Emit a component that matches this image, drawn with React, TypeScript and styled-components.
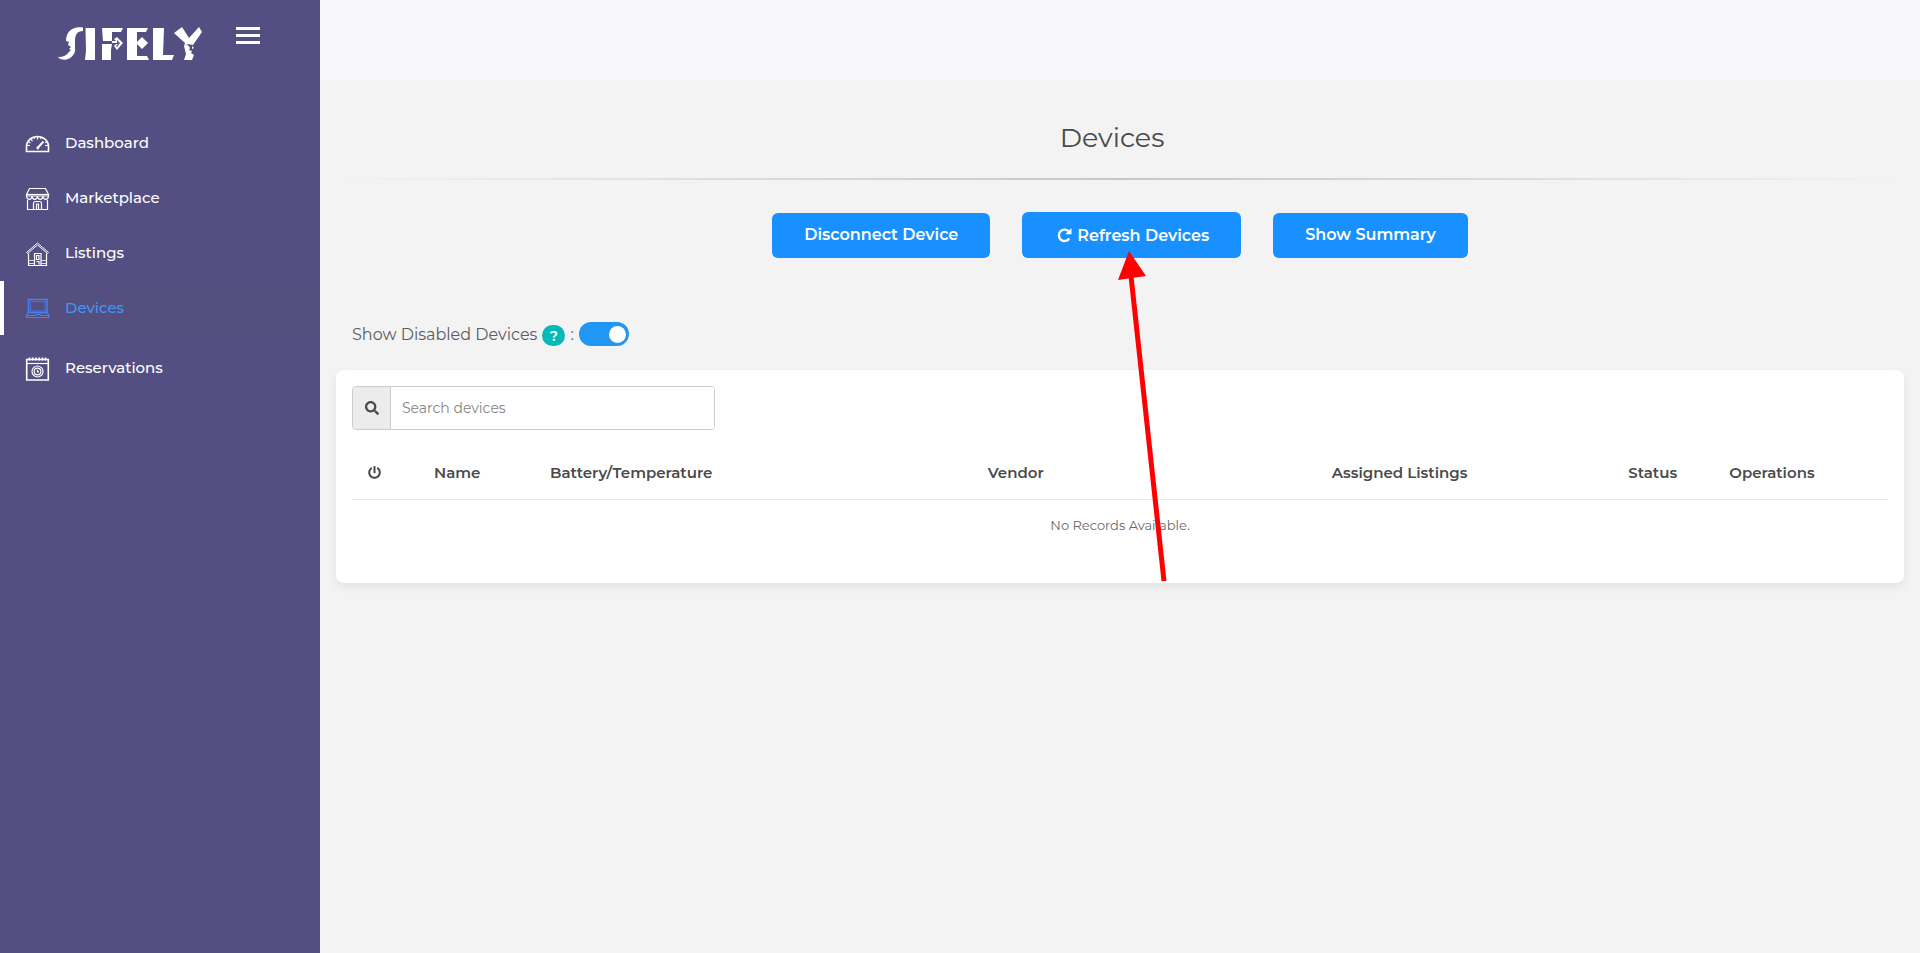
import React, { useState } from "react";
import styled, { createGlobalStyle } from "styled-components";
import { FaSearch, FaPowerOff } from "react-icons/fa";

const GlobalStyle = createGlobalStyle`
  * { box-sizing: border-box; }
  body {
    margin: 0;
    background: #f3f3f3;
    color: #4a4a4a;
    font-family: Montserrat, Inter, "Open Sans", sans-serif;
    font-size: 14px;
  }
  button, input { font-family: inherit; }
`;

const Page = styled.div`
  position: relative;
  display: flex;
  min-height: 100vh;
`;

const Sidebar = styled.aside`
  flex: 0 0 320px;
  background: #544f82;
`;

const Brand = styled.div`
  display: flex;
  align-items: flex-start;
  gap: 33px;
  height: 115px;
  padding: 24px 0 0 57px;
`;

const LogoLink = styled.a`
  display: block;
  line-height: 0;
`;

const MenuButton = styled.button`
  display: flex;
  flex-direction: column;
  gap: 4px;
  margin-top: 3px;
  padding: 0;
  border: 0;
  background: none;
  cursor: pointer;
`;

const MenuBar = styled.span`
  width: 24px;
  height: 3px;
  background: #fff;
`;

const NavLink = styled.a<{ $active?: boolean; $spaced?: boolean }>`
  display: flex;
  align-items: center;
  gap: 15px;
  height: 54px;
  margin-top: ${(p) => (p.$spaced ? 6 : 1)}px;
  padding-bottom: 2px;
  padding-left: ${(p) => (p.$active ? 21 : 25)}px;
  border-left: ${(p) => (p.$active ? "4px solid #fff" : "0")};
  background: ${(p) => (p.$active ? "#554f80" : "transparent")};
  color: ${(p) => (p.$active ? "#3f96f2" : "#fff")};
  font-size: 15px;
  font-weight: 500;
  text-decoration: none;

  svg {
    color: ${(p) => (p.$active ? "#4780f0" : "#fff")};
    margin-top: 2px;
  }
`;

const Main = styled.main`
  flex: 1;
  min-width: 0;
`;

const TopBar = styled.header`
  height: 80px;
  background: #f8f8fb;
`;

const Content = styled.div`
  padding: 0 16px 32px;
`;

const Title = styled.h1`
  margin: 0;
  padding: 41px 16px 23px 0;
  font-size: 27px;
  line-height: 34px;
  font-weight: 400;
  text-align: center;
`;

const Rule = styled.hr`
  height: 2px;
  margin: 0;
  border: 0;
  background: linear-gradient(to right, transparent, #c6c6c6, transparent);
`;

const Actions = styled.div`
  display: flex;
  justify-content: center;
  align-items: flex-end;
  gap: 32px;
  padding-top: 32px;
`;

const ActionButton = styled.button<{ $tall?: boolean }>`
  display: flex;
  align-items: center;
  justify-content: center;
  gap: 5px;
  height: ${(p) => (p.$tall ? 46 : 45)}px;
  padding: ${(p) => (p.$tall ? "0 32px 0 35px" : "0 32px 2px")};
  border: 0;
  border-radius: 6px;
  background: #1890ff;
  color: #fff;
  font-size: 16px;
  font-weight: 600;
  cursor: pointer;
`;

const FilterRow = styled.div`
  display: flex;
  align-items: center;
  gap: 5px;
  height: 24px;
  margin: 64px 16px 24px;
  color: #5c5c5c;
  font-size: 16px;
  font-weight: 400;
`;

const HelpButton = styled.button`
  width: 23px;
  height: 21px;
  margin-top: 3px;
  padding: 0;
  border: 0;
  border-radius: 11px;
  background: #04b9b9;
  color: #fff;
  font-size: 14px;
  font-weight: 600;
  line-height: 20px;
`;

const Switch = styled.input`
  appearance: none;
  display: flex;
  align-items: center;
  justify-content: flex-start;
  width: 50px;
  height: 24px;
  margin: 0;
  padding: 0 3px;
  border-radius: 12px;
  background: #ccc;
  cursor: pointer;

  &::before {
    content: "";
    width: 17px;
    height: 17px;
    border-radius: 50%;
    background: #fff;
  }

  &:checked {
    justify-content: flex-end;
    background: #2196f3;
  }
`;

const Card = styled.section`
  min-height: 213px;
  padding: 16px;
  border-radius: 8px;
  background: #fff;
  box-shadow: 0 4px 10px rgba(0, 0, 0, 0.07);
`;

const SearchGroup = styled.label`
  display: flex;
  width: 363px;
  max-width: 100%;
  height: 44px;
  border: 1px solid #ccc;
  border-radius: 4px;
  overflow: hidden;
`;

const SearchIcon = styled.span`
  display: flex;
  align-items: center;
  justify-content: center;
  width: 38px;
  border-right: 1px solid #ccc;
  background: #ececec;
`;

const SearchInput = styled.input`
  flex: 1;
  min-width: 0;
  padding: 0 11px;
  border: 0;
  outline: 0;
  color: #4a4a4a;
  font-size: 14px;

  &::placeholder { color: #858585; }
`;

const Table = styled.table`
  width: 100%;
  margin-top: 15px;
  border-collapse: collapse;
  table-layout: fixed;
`;

const HeadCell = styled.th`
  height: 54px;
  padding: 1px 12px 0;
  border-bottom: 1px solid #e9e9e9;
  font-size: 15px;
  font-weight: 600;
  text-align: left;
  white-space: nowrap;
`;

const HeadIcon = styled(HeadCell)`
  padding-left: 16px;
  line-height: 0;
`;

const EmptyCell = styled.td`
  height: 52px;
  padding: 0;
  color: #686868;
  font-size: 13px;
  font-weight: 400;
  text-align: center;
`;

const Pointer = styled.svg`
  position: absolute;
  top: 250px;
  left: calc(50% + 156px);
  pointer-events: none;
`;

const iconProps = {
  width: 25,
  height: 25,
  viewBox: "0 0 25 25",
  fill: "none",
  stroke: "currentColor",
  strokeWidth: 1.2,
  "aria-hidden": true,
};

const Logo = () => (
  <svg width="146" height="37" viewBox="0 0 146 37" fill="#fff" role="img" aria-label="Sifely">
    <path d="M26 3.500V7C20 7 18 11 18 17V24C19 28 16 32 13 34C9 37 3 36 1 33C6 33 9 32 12 28L14 26L12 25L14 23L11 21L12 18L9 17C9 8 15 2 26 3.500Z" />
    <path d="M28.500 4H38V36H28L29 27Z" />
    <path d="M45 4H66L64 8H55V17H46Z" />
    <path d="M45 20H55L54 26V36H45Z" />
    <path d="M55 17H59L57 15L60 13L66 19L60 26L57 22L59 20H61L59 22L60 23L63 19L60 16V19H55Z" />
    <path d="M70 4H91L89 8H80V32H90L92 36H70Z" />
    <path d="M85 13L91 19L85 25L79 19Z" />
    <path d="M96 4H107L106 31H117L115 36H96Z" />
    <path d="M117 9L125 3L132 14L142 3L145 8L136 21L131 20L127 23L128 19Z" />
    <path d="M127 22L131 21L133 24L132 26L135 27L134 29L137 31L135 36H127L129 30Z" />
    <path d="M135 22L137 24L135 25Z" />
  </svg>
);

const DashboardIcon = () => (
  <svg {...iconProps}>
    <path d="M1.500 20.500V15.500a11 10 0 0 1 22 0V20.500Z" strokeWidth="1.600" />
    <path d="M12.500 6v2.500M6 8.500l1.500 1.500M2 14.500h3M20 14.500h3M3.500 11l2 1M9 6.500l.5 1.500M16 6.500l-.5 1.500M21.500 11l-1.500.8" />
    <path d="M13 16.500l5.500-6" strokeWidth="1.900" />
    <circle cx="12.800" cy="17" r=".8" />
  </svg>
);

const MarketIcon = () => (
  <svg {...iconProps}>
    <path d="M4.500 2.500h16l3 6v1.500H1.500V8.500Z" />
    <path d="M2 8.500h21" />
    <path d="M1.500 10c.5 4.500 5 4.500 5.500 0c.5 4.500 5 4.500 5.500 0c.5 4.500 5 4.500 5.500 0c.5 4.500 5 4.500 5.500 0" />
    <path d="M2.500 14v9.500h20V14M8.500 23.500V17.500q0-2 2-2h4q2 0 2 2V23.500M11.500 23.500v-5.500h2v5.500" />
  </svg>
);

const ListingsIcon = () => (
  <svg {...iconProps}>
    <path d="M1.500 11.500L12.500 2L23.500 11.500L22.500 12.500L12.500 4L2.500 12.500Z" strokeWidth="1" />
    <path d="M3.500 12.500v12h18v-12M9.500 24V12.500h6.500V24M11.500 14.500h2.500v4h-2.500ZM11.500 20.500h2.500v3" />
    <path d="M3.500 19.500h6M16 19.500h5.500M3.500 22.500h6M16 22.500h5.500" strokeWidth=".8" />
  </svg>
);

const DevicesIcon = () => (
  <svg {...iconProps}>
    <path d="M3.500 3.500h18.500v13h-18.500Z" strokeWidth="1.500" />
    <path d="M5.500 5.500h14.500v9.500h-14.500Z" strokeWidth=".7" />
    <path d="M3.500 16.500L1.500 19.500v2h22.500v-2l-2-3M1.500 19.500h8l1-1h4.500l1 1h8" />
  </svg>
);

const ReservationsIcon = () => (
  <svg {...iconProps}>
    <path d="M1.700 3.500h21.600v20.500H1.700Z" strokeWidth="1.600" />
    <path d="M2 7.500h21" />
    <path d="M4.500 4.500V1.500M7.700 4.500V1.500M10.900 4.500V1.500M14.100 4.500V1.500M17.300 4.500V1.500M20.500 4.500V1.500" strokeWidth="1.700" />
    <circle cx="12.500" cy="15.500" r="5.500" />
    <circle cx="12.500" cy="15.500" r="3.300" />
    <path d="M12.500 13.800v2h1.500" />
  </svg>
);

const RefreshIcon = () => (
  <svg width="15" height="16" viewBox="0 0 15 16" aria-hidden="true">
    <path d="M12.300 11.500A5.700 5.700 0 1 1 11.300 4" fill="none" stroke="#fff" strokeWidth="2.400" />
    <path d="M14.500 1V7.200H8.300Z" fill="#fff" />
  </svg>
);

const navItems = [
  { label: "Dashboard", Icon: DashboardIcon },
  { label: "Marketplace", Icon: MarketIcon },
  { label: "Listings", Icon: ListingsIcon },
  { label: "Devices", Icon: DevicesIcon, active: true },
  { label: "Reservations", Icon: ReservationsIcon, spaced: true },
];

const columns = [
  { label: "Name", width: "116px" },
  { label: "Battery/Temperature", width: "28.5%" },
  { label: "Vendor", width: "22.4%" },
  { label: "Assigned Listings", width: "19.3%" },
  { label: "Status", width: "101px" },
  { label: "Operations", width: "auto" },
];

export default function App() {
  const [showDisabled, setShowDisabled] = useState(true);
  const [query, setQuery] = useState("");

  return (
    <>
      <GlobalStyle />
      <Page>
        <Sidebar>
          <Brand>
            <LogoLink href="#home">
              <Logo />
            </LogoLink>
            <MenuButton aria-label="Toggle menu">
              <MenuBar />
              <MenuBar />
              <MenuBar />
            </MenuButton>
          </Brand>
          <nav>
            {navItems.map(({ label, Icon, active, spaced }) => (
              <NavLink key={label} href={"#" + label.toLowerCase()} $active={active} $spaced={spaced}>
                <Icon />
                {label}
              </NavLink>
            ))}
          </nav>
        </Sidebar>
        <Main>
          <TopBar />
          <Content>
            <Title>Devices</Title>
            <Rule />
            <Actions>
              <ActionButton>Disconnect Device</ActionButton>
              <ActionButton $tall>
                <RefreshIcon />
                Refresh Devices
              </ActionButton>
              <ActionButton>Show Summary</ActionButton>
            </Actions>
            <FilterRow>
              <label htmlFor="show-disabled">Show Disabled Devices</label>
              <HelpButton aria-label="Help">?</HelpButton>
              <span>:</span>
              <Switch
                id="show-disabled"
                type="checkbox"
                role="switch"
                checked={showDisabled}
                onChange={(e) => setShowDisabled(e.target.checked)}
              />
            </FilterRow>
            <Card>
              <SearchGroup>
                <SearchIcon>
                  <FaSearch size={14} />
                </SearchIcon>
                <SearchInput
                  type="text"
                  aria-label="Search devices"
                  placeholder="Search devices"
                  value={query}
                  onChange={(e) => setQuery(e.target.value)}
                />
              </SearchGroup>
              <Table>
                <colgroup>
                  <col style={{ width: "70px" }} />
                  {columns.map((c) => (
                    <col key={c.label} style={{ width: c.width }} />
                  ))}
                </colgroup>
                <thead>
                  <tr>
                    <HeadIcon aria-label="Power">
                      <FaPowerOff size={13} />
                    </HeadIcon>
                    {columns.map((c) => (
                      <HeadCell key={c.label}>{c.label}</HeadCell>
                    ))}
                  </tr>
                </thead>
                <tbody>
                  <tr>
                    <EmptyCell colSpan={7}>No Records Available.</EmptyCell>
                  </tr>
                </tbody>
              </Table>
            </Card>
          </Content>
        </Main>
        <Pointer width="52" height="332" viewBox="0 0 52 332" aria-hidden="true">
          <path d="M15 26L48 331" stroke="#f00" strokeWidth="5" />
          <path d="M13 1L30 26L2 30Z" fill="#f00" />
        </Pointer>
      </Page>
    </>
  );
}
